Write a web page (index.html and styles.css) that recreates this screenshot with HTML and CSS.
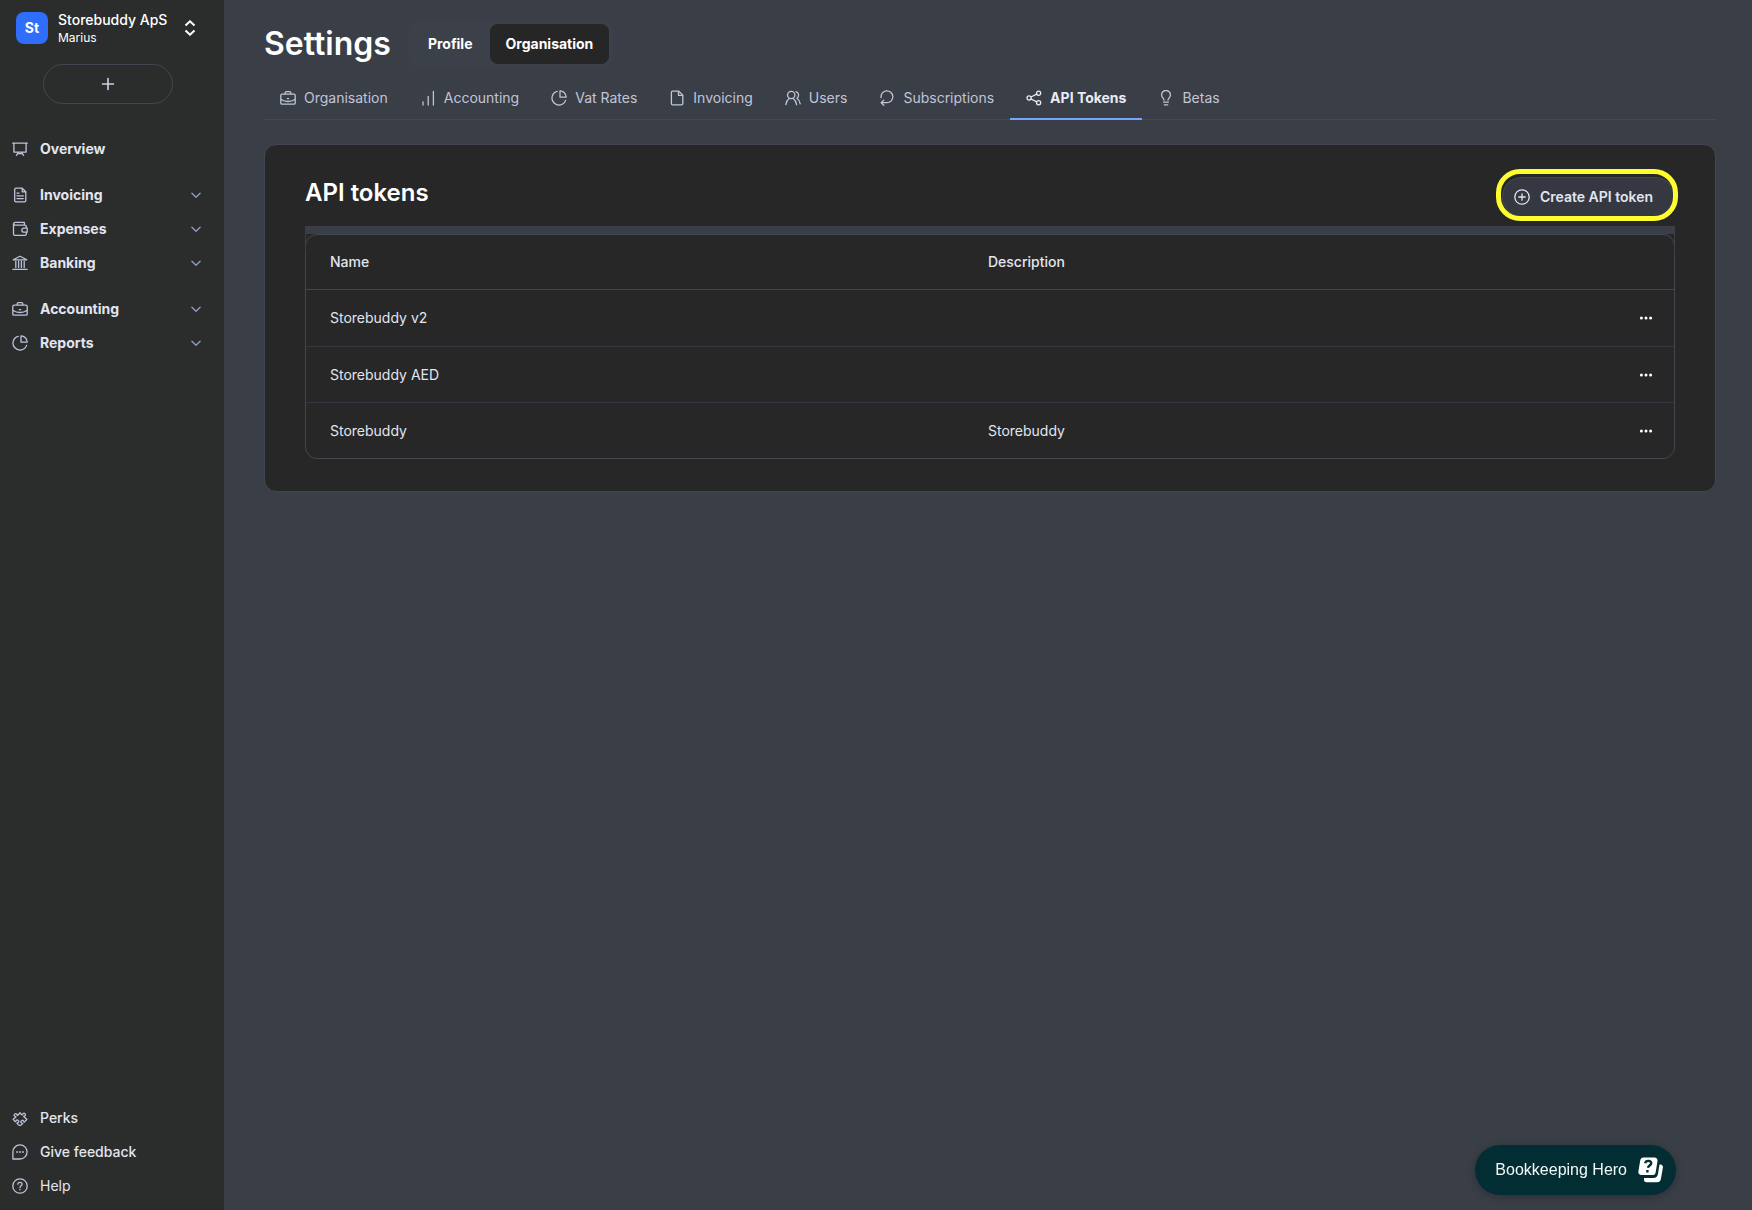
FILE: index.html
```html
<!DOCTYPE html>
<html lang="en">
<head>
    <meta charset="UTF-8">
    <meta name="viewport" content="width=device-width, initial-scale=1.0">
    <title>API tokens - Settings</title>
    <link rel="stylesheet" href="styles.css">
</head>
<body>
    <!-- Icon sprite -->
    <svg class="sprite" aria-hidden="true">
        <symbol id="i-chevron" viewBox="0 0 16 16"><path d="M3.9 6.2 8 10.2l4.1-4"/></symbol>
        <symbol id="i-plus" viewBox="0 0 16 16"><path d="M8 2.5v11M2.5 8h11"/></symbol>
        <symbol id="i-board" viewBox="0 0 16 16"><path d="M.7 2.2h14.6M1.9 2.2v8.9h12.2V2.2M6.6 11.1l-2.2 3.2M9.4 11.1l2.2 3.2M6 12.6h4"/></symbol>
        <symbol id="i-doc" viewBox="0 0 16 16"><path d="M4 1.2h6.2l3.6 3.6v8.7a1.3 1.3 0 0 1-1.3 1.3H4a1.3 1.3 0 0 1-1.3-1.3v-11A1.3 1.3 0 0 1 4 1.2zM10.2 1.2v3.6h3.6M5 6.2h2M5 8.9h6.3M5 11.6h6.3"/></symbol>
        <symbol id="i-wallet" viewBox="0 0 16 16"><path d="M14.3 6.8V5.6c0-.8-.6-1.4-1.4-1.4H3.1a1.4 1.4 0 0 1 0-2.8h9.3v2.8M1.5 2.8v10.1c0 .8.6 1.4 1.4 1.4h10c.8 0 1.4-.6 1.4-1.4v-1.5M15.2 7.2h-3.3a2 2 0 0 0 0 4h3.3z"/></symbol>
        <symbol id="i-bank" viewBox="0 0 16 16"><path d="M1.2 4.8 8 1.2l6.8 3.6zM3.8 6.4v6M6.6 6.4v6M9.4 6.4v6M12.2 6.4v6M1 14.4h14"/></symbol>
        <symbol id="i-case" viewBox="0 0 16 16"><path d="M2 4.2h12a1.2 1.2 0 0 1 1.2 1.2V13a1.2 1.2 0 0 1-1.2 1.2H2A1.2 1.2 0 0 1 .8 13V5.4A1.2 1.2 0 0 1 2 4.2zM5.2 4.2V2.8c0-.7.5-1.2 1.2-1.2h3.2c.7 0 1.2.5 1.2 1.2v1.4M.8 9.2c2.2 1.5 4.6 2.3 7.2 2.3s5-.8 7.2-2.3M7.3 8.6h1.4"/></symbol>
        <symbol id="i-pie" viewBox="0 0 16 16"><path d="M6.2 1.3a7 7 0 1 0 8.4 9.1M9 .9v6.3h6.2A6.4 6.4 0 0 0 9 .9z"/></symbol>
        <symbol id="i-bars" viewBox="0 0 16 16"><path d="M3 15v-3.2M8.2 15V6.5M13.4 15V1.5"/></symbol>
        <symbol id="i-page" viewBox="0 0 16 16"><path d="M3.6 1.1h6.2l4 4v8.5a1.2 1.2 0 0 1-1.2 1.2h-9a1.2 1.2 0 0 1-1.2-1.2V2.3a1.2 1.2 0 0 1 1.2-1.2zM9.5 1.4v4h4"/></symbol>
        <symbol id="i-users" viewBox="0 0 16 16"><circle cx="6.2" cy="5" r="3.7"/><path d="M.8 14.6c.3-2.7 1.4-4.7 3.4-6.2M8.2 8.4c2 1.5 3.1 3.5 3.4 6.2M10.9 1.6c3.2.9 3.6 5 1 6.6 2 1.3 3 3.2 3.3 5.6"/></symbol>
        <symbol id="i-repeat" viewBox="0 0 16 16"><path d="M2.1 7.7a5.9 5.9 0 1 1 5.9 5H2.4M4.8 10.1l-2.600 2.600 2.600 2.600"/></symbol>
        <symbol id="i-share" viewBox="0 0 16 16"><circle cx="3.1" cy="8" r="2.1"/><circle cx="12.6" cy="3.2" r="2.1"/><circle cx="12.6" cy="12.8" r="2.1"/><path d="M5 7l5.7-2.9M5 9l5.7 2.9"/></symbol>
        <symbol id="i-bulb" viewBox="0 0 16 16"><path d="M6 10.2c0-1-.4-1.5-1-2.1a4.4 4.4 0 1 1 6 0c-.6.6-1 1.1-1 2.1M5.7 12.2h4.6M6.3 14.8h3.4"/></symbol>
        <symbol id="i-puzzle" viewBox="0 0 24 24"><path stroke-width="1.9" transform="rotate(45 12 12)" d="M14.25 6.087c0-.355.186-.676.401-.959.221-.29.349-.634.349-1.003 0-1.036-1.007-1.875-2.25-1.875s-2.25.84-2.25 1.875c0 .369.128.713.349 1.003.215.283.401.604.401.959a.64.64 0 0 1-.657.643 48.39 48.39 0 0 1-4.163-.3c.186 1.613.293 3.25.315 4.907a.656.656 0 0 1-.658.663c-.355 0-.676-.186-.959-.401a1.647 1.647 0 0 0-1.003-.349c-1.036 0-1.875 1.007-1.875 2.25s.84 2.25 1.875 2.25c.369 0 .713-.128 1.003-.349.283-.215.604-.401.959-.401.31 0 .555.26.532.57a48.039 48.039 0 0 1-.642 5.056c1.518.19 3.058.309 4.616.354a.64.64 0 0 0 .657-.643c0-.355-.186-.676-.401-.959a1.647 1.647 0 0 1-.349-1.003c0-1.035 1.008-1.875 2.25-1.875 1.243 0 2.25.84 2.25 1.875 0 .369-.128.713-.349 1.003-.215.283-.4.604-.4.959 0 .333.277.599.61.58a48.1 48.1 0 0 0 5.427-.63 48.05 48.05 0 0 0 .582-4.717.532.532 0 0 0-.533-.57c-.355 0-.676.186-.959.401-.29.221-.634.349-1.003.349-1.035 0-1.875-1.007-1.875-2.25s.84-2.25 1.875-2.25c.37 0 .713.128 1.003.349.283.215.604.401.96.401a.656.656 0 0 0 .658-.663 48.422 48.422 0 0 0-.37-5.36c-1.886.342-3.81.574-5.766.689a.578.578 0 0 1-.61-.58z"/></symbol>
        <symbol id="i-chat" viewBox="0 0 16 16"><path d="M.9 15V8A7.1 7.1 0 1 1 8 15zM4.700 8h.9M7.600 8h.9M10.500 8h.9"/></symbol>
        <symbol id="i-help" viewBox="0 0 16 16"><circle cx="8" cy="8" r="7.2"/><path d="M5.9 6.2c.1-2.6 4.3-2.4 4.2 0 0 1.5-2.1 1.5-2.1 3.2M8 11.2v.6"/></symbol>
        <symbol id="i-add" viewBox="0 0 16 16"><circle cx="8" cy="8" r="7.2"/><path d="M8 4.8v6.4M4.8 8h6.4"/></symbol>
        <symbol id="i-dots" viewBox="0 0 16 16"><g fill="currentColor" stroke="none"><circle cx="3.4" cy="8" r="1.5"/><circle cx="8" cy="8" r="1.5"/><circle cx="12.6" cy="8" r="1.5"/></g></symbol>
    </svg>

    <div class="app">
        <aside class="sidebar">
            <button class="account" type="button">
                <span class="avatar">St</span>
                <span class="account-info">
                    <span class="account-name">Storebuddy ApS</span>
                    <span class="account-user">Marius</span>
                </span>
                <svg class="account-arrows" viewBox="0 0 12 16"><path d="M1.5 5.5 6 1.3l4.5 4.2M1.5 10.5 6 14.7l4.5-4.2"/></svg>
            </button>

            <button class="new-button" type="button" aria-label="New"><svg class="icon"><use href="#i-plus"/></svg></button>

            <nav class="nav">
                <div class="nav-group">
                    <a class="nav-item" href="#"><svg class="icon"><use href="#i-board"/></svg><span>Overview</span></a>
                </div>
                <div class="nav-group">
                    <a class="nav-item" href="#"><svg class="icon"><use href="#i-doc"/></svg><span>Invoicing</span><svg class="icon chevron"><use href="#i-chevron"/></svg></a>
                    <a class="nav-item" href="#"><svg class="icon"><use href="#i-wallet"/></svg><span>Expenses</span><svg class="icon chevron"><use href="#i-chevron"/></svg></a>
                    <a class="nav-item" href="#"><svg class="icon"><use href="#i-bank"/></svg><span>Banking</span><svg class="icon chevron"><use href="#i-chevron"/></svg></a>
                </div>
                <div class="nav-group">
                    <a class="nav-item" href="#"><svg class="icon"><use href="#i-case"/></svg><span>Accounting</span><svg class="icon chevron"><use href="#i-chevron"/></svg></a>
                    <a class="nav-item" href="#"><svg class="icon"><use href="#i-pie"/></svg><span>Reports</span><svg class="icon chevron"><use href="#i-chevron"/></svg></a>
                </div>
            </nav>

            <nav class="nav-bottom">
                <a class="nav-item medium" href="#"><svg class="icon"><use href="#i-puzzle"/></svg><span>Perks</span></a>
                <a class="nav-item medium" href="#"><svg class="icon"><use href="#i-chat"/></svg><span>Give feedback</span></a>
                <a class="nav-item regular" href="#"><svg class="icon"><use href="#i-help"/></svg><span>Help</span></a>
            </nav>
        </aside>

        <main class="main">
            <header class="page-header">
                <h1>Settings</h1>
                <div class="segment">
                    <button type="button">Profile</button>
                    <button type="button" class="selected">Organisation</button>
                </div>
            </header>

            <nav class="tabs">
                <a class="tab" href="#"><svg class="icon"><use href="#i-case"/></svg>Organisation</a>
                <a class="tab" href="#"><svg class="icon"><use href="#i-bars"/></svg>Accounting</a>
                <a class="tab" href="#"><svg class="icon"><use href="#i-pie"/></svg>Vat Rates</a>
                <a class="tab" href="#"><svg class="icon"><use href="#i-page"/></svg>Invoicing</a>
                <a class="tab" href="#"><svg class="icon"><use href="#i-users"/></svg>Users</a>
                <a class="tab" href="#"><svg class="icon"><use href="#i-repeat"/></svg>Subscriptions</a>
                <a class="tab active" href="#"><svg class="icon"><use href="#i-share"/></svg>API Tokens</a>
                <a class="tab" href="#"><svg class="icon"><use href="#i-bulb"/></svg>Betas</a>
            </nav>

            <section class="card">
                <div class="card-header">
                    <h2>API tokens</h2>
                    <button class="create-button" type="button"><svg class="icon"><use href="#i-add"/></svg>Create API token</button>
                </div>
                <div class="table-box">
                    <table>
                        <thead>
                            <tr><th>Name</th><th>Description</th><th class="actions"></th></tr>
                        </thead>
                        <tbody>
                            <tr>
                                <td>Storebuddy v2</td>
                                <td></td>
                                <td class="actions"><button type="button" aria-label="More"><svg class="icon"><use href="#i-dots"/></svg></button></td>
                            </tr>
                            <tr>
                                <td>Storebuddy AED</td>
                                <td></td>
                                <td class="actions"><button type="button" aria-label="More"><svg class="icon"><use href="#i-dots"/></svg></button></td>
                            </tr>
                            <tr>
                                <td>Storebuddy</td>
                                <td>Storebuddy</td>
                                <td class="actions"><button type="button" aria-label="More"><svg class="icon"><use href="#i-dots"/></svg></button></td>
                            </tr>
                        </tbody>
                    </table>
                </div>
            </section>
        </main>
    </div>

    <button class="help-widget" type="button">
        Bookkeeping Hero
        <svg viewBox="0 0 26 26">
            <path class="card-back" d="M21.5 7.5h1a2.5 2.5 0 0 1 2.4 3l-2 11.5a4 4 0 0 1-4 3.2H8.5A2.5 2.5 0 0 1 6 22.6V21h9.5a4.5 4.5 0 0 0 4.4-3.7z"/>
            <path class="card-front" d="M5.6.5h10.9a3 3 0 0 1 3 3.5l-1.8 11.2a3.5 3.5 0 0 1-3.4 2.9H3.4a3 3 0 0 1-3-3.5L2.2 3.4A3.5 3.5 0 0 1 5.6.5z"/>
            <path class="mark" d="M7.2 6.3c.6-3.4 6.6-3.1 6 .3-.4 2-2.9 1.9-3.3 4.2M9.4 13v2.4"/>
        </svg>
    </button>
</body>
</html>
```
FILE: styles.css
```css
* {
    box-sizing: border-box;
}

body {
    margin: 0;
    font-family: Inter, sans-serif;
    font-size: 14px;
    line-height: 20px;
    color: #e2e5f0;
    background: #3a3e47;
}

button {
    font: inherit;
    color: inherit;
    background: none;
    border: none;
    padding: 0;
    cursor: pointer;
}

a {
    color: inherit;
    text-decoration: none;
}

.sprite {
    display: none;
}

.icon {
    width: 16px;
    height: 16px;
    flex-shrink: 0;
    fill: none;
    stroke: currentColor;
    stroke-width: 1.3;
    stroke-linecap: round;
    stroke-linejoin: round;
}

.app {
    display: flex;
    min-height: 100vh;
}

/* Sidebar */
.sidebar {
    width: 224px;
    flex-shrink: 0;
    display: flex;
    flex-direction: column;
    padding: 10px 0 7px;
    background: #2b2d2c;
}

.account {
    display: flex;
    align-items: center;
    padding: 0 28px 0 16px;
    text-align: left;
    color: #fff;
}

.avatar {
    width: 32px;
    height: 32px;
    margin-right: 10px;
    border-radius: 8px;
    background: #2f6dfb;
    font-weight: 700;
    line-height: 32px;
    text-align: center;
}

.account-info {
    display: flex;
    flex-direction: column;
}

.account-name {
    font-weight: 500;
}

.account-user {
    font-size: 12px;
    line-height: 16px;
}

.account-arrows {
    width: 12px;
    height: 16px;
    margin-left: auto;
    fill: none;
    stroke: #fff;
    stroke-width: 2;
}

.new-button {
    display: flex;
    align-items: center;
    justify-content: center;
    width: 130px;
    height: 40px;
    margin: 18px 0 28px 43px;
    border: 1px solid #41464f;
    border-radius: 20px;
    color: #cdd1de;
}

.new-button .icon {
    stroke-width: 1.6;
}

.nav,
.nav-group {
    display: flex;
    flex-direction: column;
}

.nav {
    gap: 12px;
}

.nav-bottom {
    margin-top: auto;
}

.nav-item {
    display: flex;
    align-items: center;
    gap: 12px;
    height: 34px;
    padding: 0 20px 0 12px;
    font-weight: 700;
}

.nav-item.medium {
    font-weight: 500;
}

.nav-item.regular {
    font-weight: 400;
}

.nav-item .icon {
    color: #bcc4da;
}

.nav-item .chevron {
    margin-left: auto;
    color: #8e9ec8;
}

/* Main */
.main {
    flex: 1;
    min-width: 0;
    padding: 20px 36px 40px 40px;
}

.page-header {
    display: flex;
    align-items: center;
    gap: 17px;
}

h1,
h2 {
    margin: 0;
    color: #fff;
}

h1 {
    font-size: 32px;
    line-height: 40px;
    font-weight: 600;
}

.segment {
    display: flex;
    gap: 1px;
    padding: 4px;
    border-radius: 12px;
    background: #3b4049;
}

.segment button {
    height: 40px;
    padding: 0 16px;
    border-radius: 8px;
    font-weight: 700;
    color: #fff;
}

.segment .selected {
    background: #262626;
}

.tabs {
    display: flex;
    margin-top: 8px;
    border-bottom: 1px solid #434854;
}

.tab {
    display: flex;
    align-items: center;
    gap: 8px;
    height: 44px;
    margin-bottom: -1px;
    padding: 2px 16px 0;
    border-bottom: 2px solid transparent;
    color: #c0c5d8;
}

.tab.active {
    border-bottom-color: #75a5ff;
    font-weight: 700;
    color: #e8ebf5;
}

.card {
    margin-top: 24px;
    padding: 24px 40px 32px;
    border: 1px solid #434850;
    border-radius: 12px;
    background: #272727;
}

.card-header {
    display: flex;
    align-items: flex-start;
    justify-content: space-between;
    height: 57px;
}

h2 {
    font-size: 24px;
    line-height: 48px;
    font-weight: 600;
}

.create-button {
    position: relative;
    display: flex;
    align-items: center;
    gap: 10px;
    height: 40px;
    margin-top: 8px;
    padding: 0 22px 0 12px;
    border-radius: 20px;
    background: #353841;
    box-shadow: inset 0 0 0 1px #434850;
    font-weight: 600;
}

/* Highlight ring round the button */
.create-button::after {
    content: "";
    position: absolute;
    inset: -8px -3px -4px -6px;
    border: 5px solid #fdfd30;
    border-radius: 24px;
}

/* Rounded table under a solid band */
.table-box {
    position: relative;
    border: 1px solid #434850;
    border-radius: 12px;
    margin-top: 8px;
}

.table-box::before {
    content: "";
    position: absolute;
    top: -9px;
    left: -1px;
    right: -1px;
    height: 20px;
    border: 1px solid #3a3e47;
    border-top-width: 8px;
    border-bottom: none;
}

table {
    width: 100%;
    table-layout: fixed;
    border-collapse: separate;
    border-spacing: 0;
}

th,
td {
    height: 56px;
    padding: 0 24px;
    text-align: left;
    font-weight: 400;
    border-bottom: 1px solid #343740;
}

th {
    height: 55px;
    font-weight: 500;
    border-color: #434850;
}

tr:first-child td {
    height: 57px;
}

tr:last-child td {
    height: 55px;
    border-bottom: none;
}

thead .actions,
tbody .actions {
    width: 52px;
    padding: 0 20px 0 0;
}

.actions button {
    display: flex;
    margin-left: auto;
    color: #fff;
}

/* Floating help widget */
.help-widget {
    position: fixed;
    right: 76px;
    bottom: 15px;
    display: flex;
    align-items: center;
    gap: 11px;
    height: 50px;
    padding: 0 12px 0 20px;
    border-radius: 25px;
    background: #022e33;
    box-shadow: 0 2px 8px rgba(0, 0, 0, 0.25);
    color: #f4f7f8;
    font-family: "Liberation Sans", sans-serif;
    font-size: 16px;
}

.help-widget svg {
    width: 26px;
    height: 26px;
}

.card-back,
.card-front {
    fill: #fff;
}

.mark {
    fill: none;
    stroke: #022e33;
    stroke-width: 2.4;
}
```
